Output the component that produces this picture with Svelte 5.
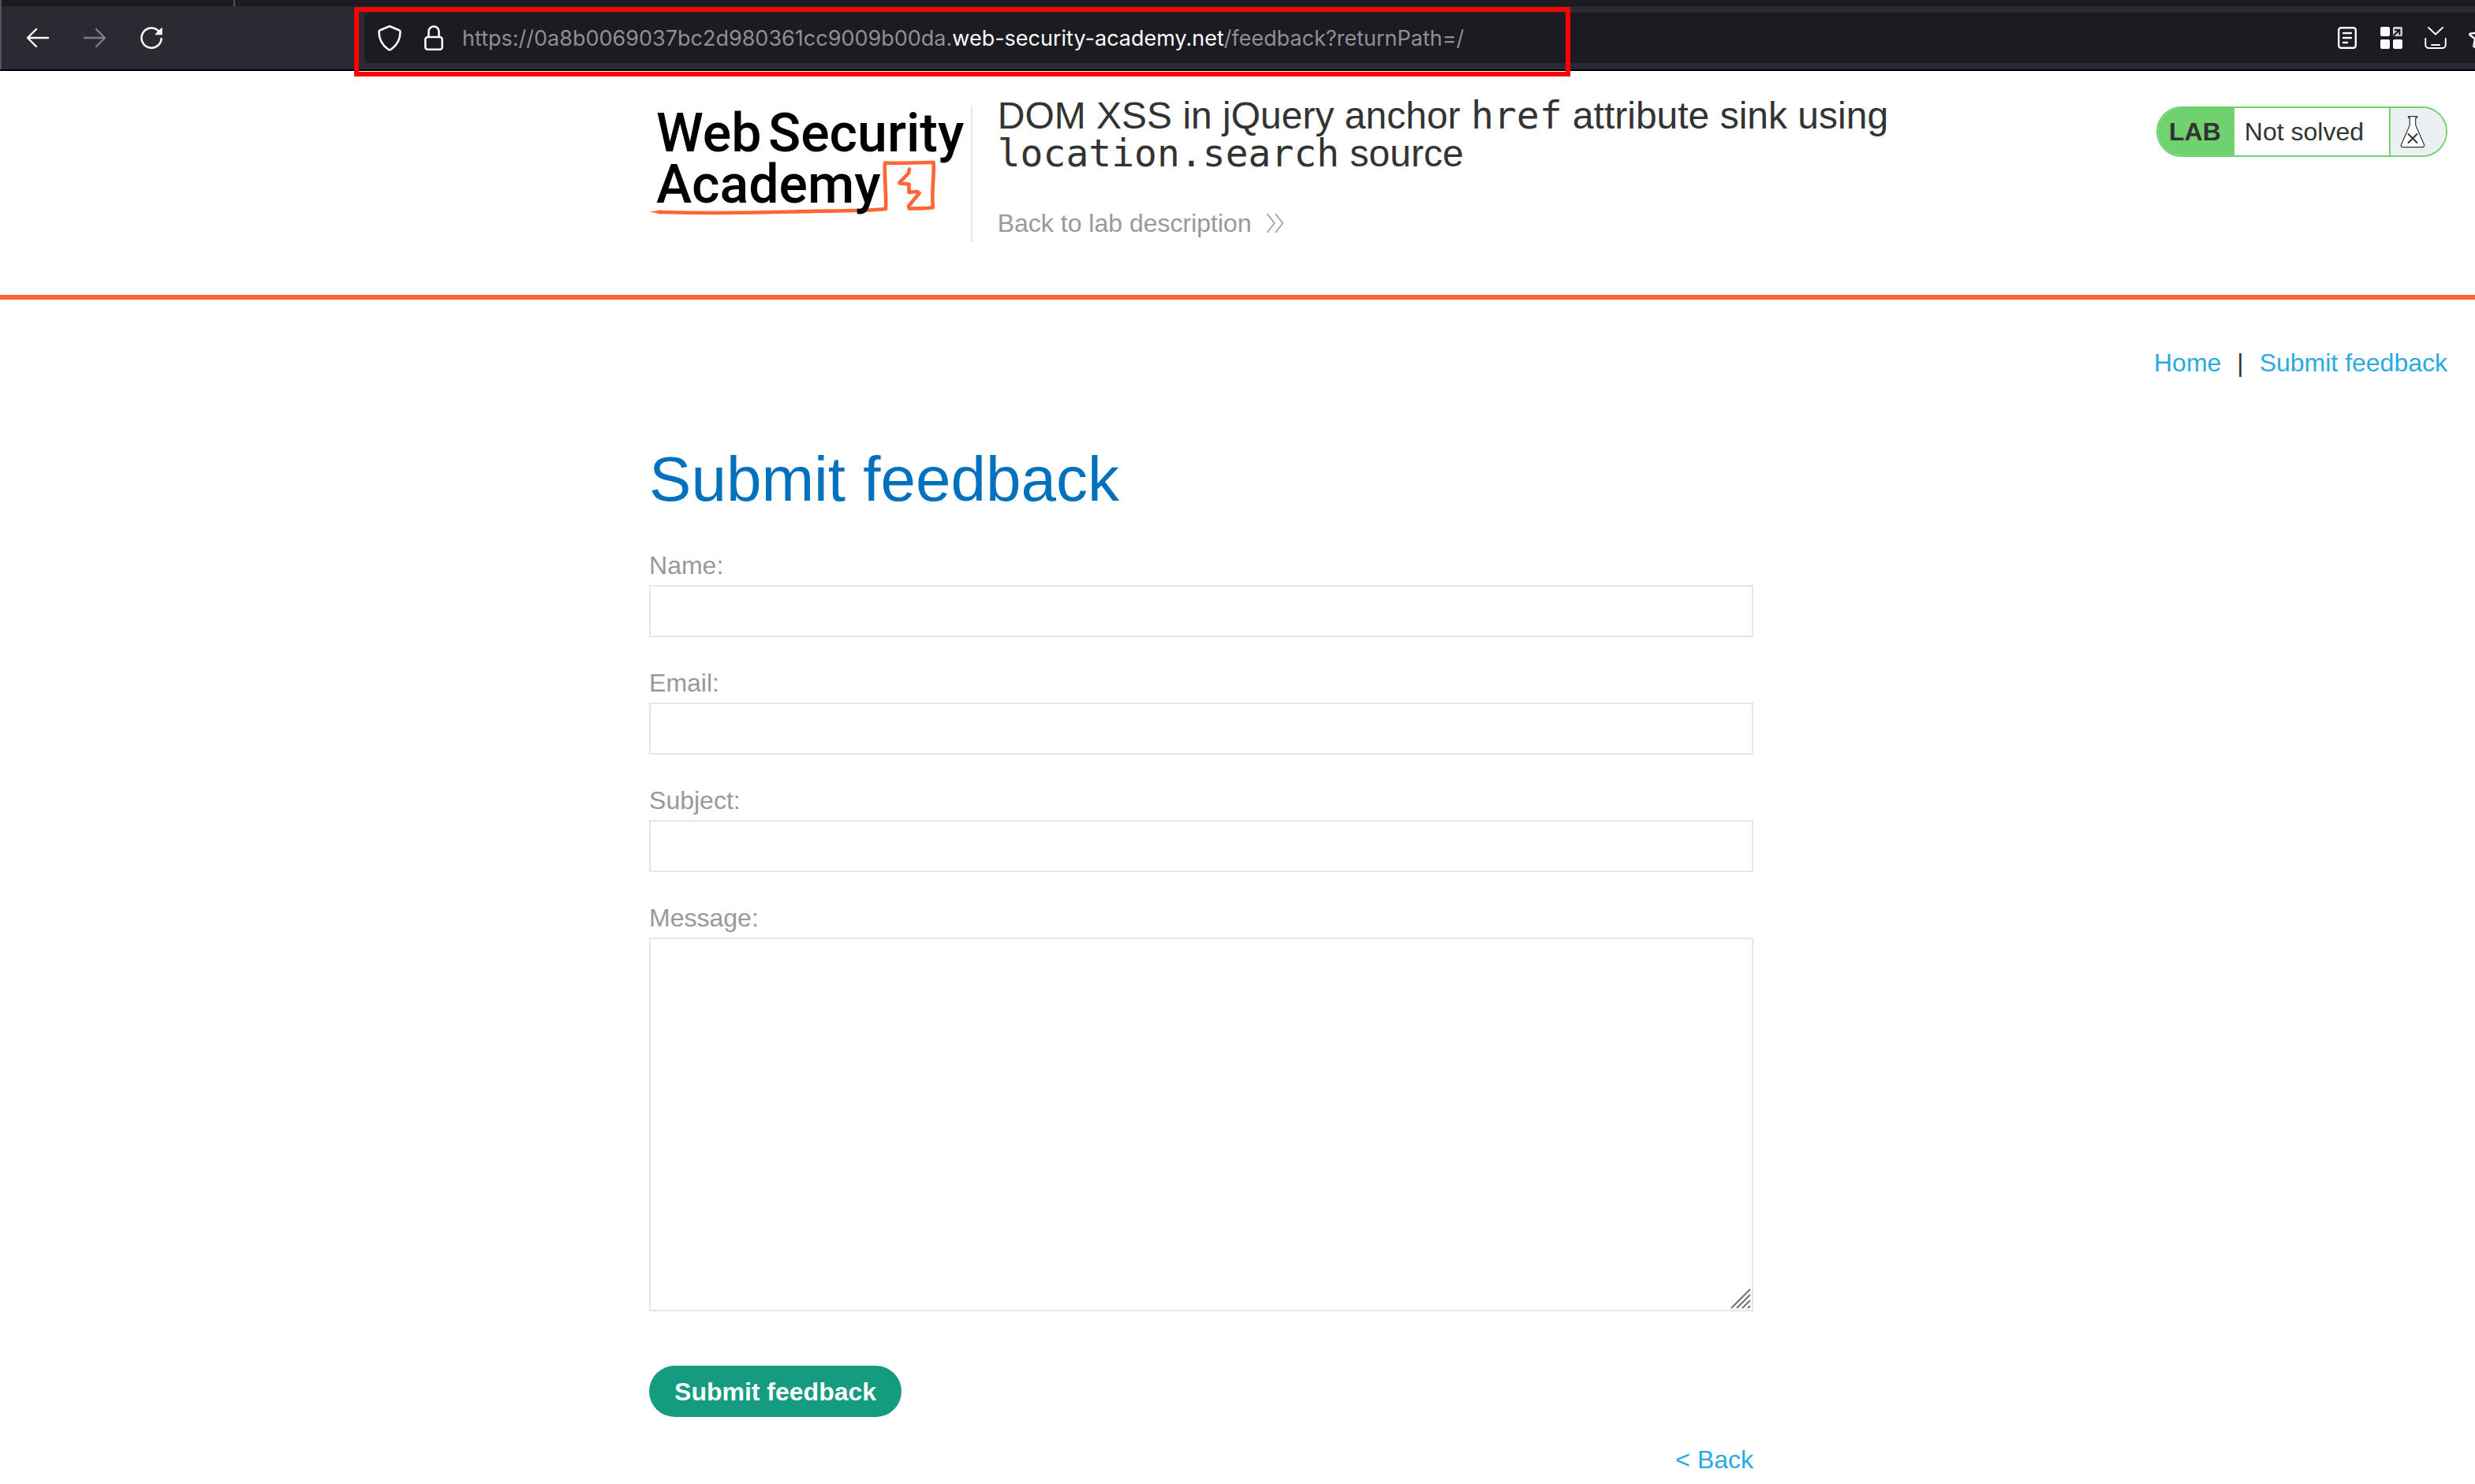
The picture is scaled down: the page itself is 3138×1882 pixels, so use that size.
<script>
  const fields = [
    { id: 'name', label: 'Name:', type: 'text' },
    { id: 'email', label: 'Email:', type: 'email' },
    { id: 'subject', label: 'Subject:', type: 'text' }
  ];
</script>

<div class="browser">
  <div class="tabs"><span class="tab"></span></div>
  <div class="toolbar">
    <div class="buttons">
      <button aria-label="Back">
        <svg width="32" height="32" viewBox="0 0 32 32" fill="none" stroke="#fbfbfe" stroke-width="2.4" stroke-linecap="round" stroke-linejoin="round"><path d="M29 16H3M14 5L3 16l11 11" /></svg>
      </button>
      <button aria-label="Forward" disabled>
        <svg width="32" height="32" viewBox="0 0 32 32" fill="none" stroke="#7f7e85" stroke-width="2.4" stroke-linecap="round" stroke-linejoin="round"><path d="M3 16h26M18 5l11 11-11 11" /></svg>
      </button>
      <button aria-label="Reload">
        <svg width="32" height="32" viewBox="0 0 32 32" fill="none" stroke="#fbfbfe" stroke-width="2.6" stroke-linecap="round"><path d="M28.6 17A12.6 12.6 0 1 1 25.5 7.8" /><path d="M21.5 11.5h7.5V4z" fill="#fbfbfe" stroke-width="1.5" stroke-linejoin="round" /></svg>
      </button>
    </div>
    <div class="urlbar">
      <div class="site">
        <svg width="32" height="34" viewBox="0 0 32 34" fill="none" stroke="#fbfbfe" stroke-width="2.6" stroke-linejoin="round"><path d="M16 2.3L28 7.3c1 .4 1.500 1.200 1.500 2.200C29.500 19 25 26.500 18 31.500c-1.300.9-2.700.9-4 0C7 26.500 2.500 19 2.500 9.500c0-1 .5-1.800 1.500-2.200z" /></svg>
        <svg width="32" height="34" viewBox="0 0 32 34" fill="none" stroke="#fbfbfe" stroke-width="2.6"><rect x="5.3" y="16" width="21.4" height="15.7" rx="3" /><path d="M9.500 16V9a6.500 6.500 0 0 1 13 0v7" /></svg>
      </div>
      <p class="url">https://0a8b0069037bc2d980361cc9009b00da.<b>web-security-academy.net</b>/feedback?returnPath=/</p>
      <div class="actions">
        <svg width="28" height="32" viewBox="0 0 28 32" fill="none" stroke="#fbfbfe" stroke-width="2.4" stroke-linecap="round"><rect x="3.2" y="3.2" width="21.6" height="25.6" rx="3" /><path d="M9 10h10M9 16h10M9 22h5" /></svg>
        <svg width="28" height="32" viewBox="0 0 28 32" fill="#fbfbfe"><rect y="2" width="12" height="12" rx="2" /><rect y="18" width="12" height="12" rx="2" /><rect x="16" y="18" width="12" height="12" rx="2" /><rect x="16" y="2" width="12" height="12" rx="2" fill="#cfcfd2" /><path d="M16.5 13.5l7.500-7.500M18 6h6.300v6.300" fill="none" stroke="#1c1b22" stroke-width="2.2" /></svg>
        <svg width="28" height="32" viewBox="0 0 28 32" fill="none" stroke="#fbfbfe" stroke-width="2" stroke-linecap="round" stroke-linejoin="round"><path d="M5 3l9 8.500L23 3M1.200 17v7.500a4.500 4.500 0 0 0 4.500 4.500h16.600a4.500 4.500 0 0 0 4.500-4.500V17M9 25h10" /></svg>
        <svg width="28" height="32" viewBox="0 0 28 32" fill="none" stroke="#fbfbfe" stroke-width="2.4" stroke-linejoin="round"><path d="M14 2.500l3.700 7.800 8.500 1.100-6.200 5.900 1.600 8.500c.3 1.500-.7 2.200-2 1.500L14 23.500l-5.600 3.800c-1.300.7-2.300 0-2-1.500L8 17.300 1.800 12.500c-1-1-.5-2 .8-2.100l7.700-.6z" /></svg>
      </div>
    </div>
  </div>
  <div class="highlight"></div>
</div>

<header>
  <div class="header-row">
    <a class="logo" href="#academy" aria-label="Web Security Academy">
      <svg width="407" height="150" viewBox="0 0 407 150">
        <g fill="none" stroke="#f63" stroke-width="4.6" stroke-linejoin="round" stroke-linecap="round">
          <path d="M12 134c60 1.500 120 1 170-.5 40-1.500 80 0 117-3.500 1-18-2-40-1-58.500 20 1.500 40-1 61.500-.5 1.500 16-3 38-.5 57-9 2-20 1-30 1.500l-1-3 13.500-16.500-3-2-10 1 0-10.500-11.500-1-.5-1 11.500-12 1-5" />
        </g>
        <path d="M0 133.500L14 131.500v5z" fill="#f63" />
        <g font-family="Roboto, 'Liberation Sans', sans-serif" font-size="68" font-weight="500" fill="#000">
          <text x="8" y="57">Web</text>
          <text x="150" y="57">Security</text>
          <text x="8" y="122">Academy</text>
        </g>
      </svg>
    </a>
    <div class="title">
      <h2>DOM XSS in jQuery anchor <code>href</code> attribute sink using <code>location.search</code> source</h2>
      <a class="back-lab" href="#lab">
        Back to lab description
        <svg width="24" height="28" viewBox="0 0 24 28" fill="none" stroke="#999" stroke-width="1.5"><path d="M1.500 2l9.500 12-9.500 12M12 2l9.500 12L12 26" /></svg>
      </a>
    </div>
    <div class="status">
      <strong>LAB</strong>
      <span class="state">Not solved</span>
      <span class="flask">
        <svg width="34" height="42" viewBox="0 0 34 42" fill="#fff" stroke="#333" stroke-width="1.2"><path d="M11.500 1.600h11v1.800h-1.800v9.300l10.700 24.500c.8 2-.2 3.400-2 3.400H4.600c-1.800 0-2.800-1.400-2-3.400L13.300 12.700V3.400h-1.800z" /><path d="M11 23.500l12 12M23 23.500l-12 12" stroke-width="2" /></svg>
      </span>
    </div>
  </div>
</header>

<main>
  <nav>
    <a href="#home">Home</a><span>|</span><a href="#feedback">Submit feedback</a>
  </nav>
  <div class="column">
    <h1>Submit feedback</h1>
    <form>
      {#each fields as f}
        <label for={f.id}>{f.label}</label>
        <input id={f.id} type={f.type} />
      {/each}
      <label for="message">Message:</label>
      <div class="area">
        <textarea id="message"></textarea>
        <svg class="grip" width="26" height="26" viewBox="0 0 26 26" stroke="#6e6e6e" stroke-width="2"><path d="M1 25L25 1M8 25L25 8M15 25L25 15M22 25l3-3" /></svg>
      </div>
      <button type="submit" class="submit">Submit feedback</button>
    </form>
    <a class="back" href="#back">&lt; Back</a>
  </div>
</main>

<style>
  :global(body) {
    margin: 0;
    background: #fff;
    color: #333;
    font: 32px/36px 'Liberation Sans', Arial, sans-serif;
    overflow-x: hidden;
  }
  a { color: #29abe2; text-decoration: none; }
  svg { display: block; flex: none; overflow: visible; }

  .browser {
    position: relative;
    background: #2b2a33;
    border-bottom: 2px solid #000;
    overflow-x: clip;
  }
  .tabs { height: 8px; background: #1c1b22; }
  .tab {
    display: block;
    box-sizing: border-box;
    width: 298px;
    height: 8px;
    border-left: 2px solid #55545c;
    border-right: 2px solid #55545c;
  }
  .toolbar {
    display: flex;
    height: 80px;
    box-sizing: border-box;
    padding: 8px 0;
    border-left: 2px solid #55545c;
  }
  .buttons {
    display: flex;
    align-items: center;
    gap: 40px;
    width: 430px;
    padding-left: 30px;
    flex: none;
  }
  .buttons button { padding: 0; border: 0; background: none; }
  .urlbar {
    display: flex;
    align-items: center;
    gap: 20px;
    flex: 1;
    padding-left: 16px;
    background: #1c1b22;
    border-radius: 8px 0 0 8px;
    min-width: 0;
  }
  .site { display: flex; gap: 24px; }
  .url {
    flex: 1;
    margin: 0;
    padding-top: 2px;
    font: 27px/36px Inter, sans-serif;
    color: #8f8f94;
    white-space: nowrap;
    min-width: 0;
  }
  .url b { font-weight: 400; color: #fbfbfe; }
  .actions { display: flex; gap: 28px; margin-right: -20px; }
  .highlight {
    position: absolute;
    left: 449px;
    top: 9px;
    box-sizing: border-box;
    width: 1542px;
    height: 88px;
    border: 6px solid #f00;
    z-index: 1;
  }

  header { border-bottom: 6px solid #f63; }
  .header-row {
    display: flex;
    align-items: flex-start;
    box-sizing: border-box;
    min-height: 284px;
    padding: 33px 35px 45px 26.25%;
  }
  .logo {
    box-sizing: border-box;
    height: 172px;
    width: 409px;
    margin-top: 12px;
    flex: none;
    border-right: 2px solid #e5e5e5;
  }
  .title { flex: 1; padding-left: 32px; }
  h2 {
    max-width: 1240px;
    margin: 0 0 46px;
    font-size: 48px;
    line-height: 48px;
    font-weight: 400;
  }
  code { font: 48px/0 'DejaVu Sans Mono', monospace; }
  .back-lab { display: flex; align-items: center; gap: 18px; color: #999; }
  .status {
    display: flex;
    align-items: stretch;
    height: 60px;
    margin-top: 12px;
    border: 2px solid #70d16f;
    border-radius: 32px;
    line-height: 60px;
    overflow: hidden;
    background: #fff;
  }
  .status strong { padding: 0 17px 0 14px; background: #70d16f; }
  .state { padding: 0 32px 0 13px; }
  .flask {
    display: flex;
    align-items: center;
    width: 59px;
    padding-left: 11px;
    border-left: 2px solid #70d16f;
    background: #ebf0f3;
  }

  nav {
    display: flex;
    justify-content: flex-end;
    gap: 20px;
    padding: 62px 35px 0 0;
  }
  .column { width: 44.615%; margin-left: 26.228%; }
  h1 {
    margin: 0 0 45px;
    padding-top: 84px;
    font-size: 80px;
    line-height: 92px;
    font-weight: 400;
    color: #0071bc;
  }
  form { display: flex; flex-direction: column; }
  label { color: #999; margin-bottom: 7px; }
  input {
    box-sizing: border-box;
    height: 66px;
    margin: 0 0 40px;
    padding: 0 16px;
    border: 2px solid #e5e5e5;
    font: inherit;
  }
  .area { position: relative; }
  textarea {
    display: block;
    box-sizing: border-box;
    width: 100%;
    height: 474px;
    padding: 16px;
    border: 2px solid #e5e5e5;
    font: inherit;
    resize: none;
  }
  .grip { position: absolute; right: 3px; bottom: 3px; fill: none; }
  .submit {
    align-self: flex-start;
    height: 65px;
    margin: 69px 0 36px;
    padding: 0 32px;
    border: 0;
    border-radius: 33px;
    background: #159c80;
    color: #fff;
    font: bold 32px/36px 'Liberation Sans', Arial, sans-serif;
  }
  .back { display: block; text-align: right; }
</style>
